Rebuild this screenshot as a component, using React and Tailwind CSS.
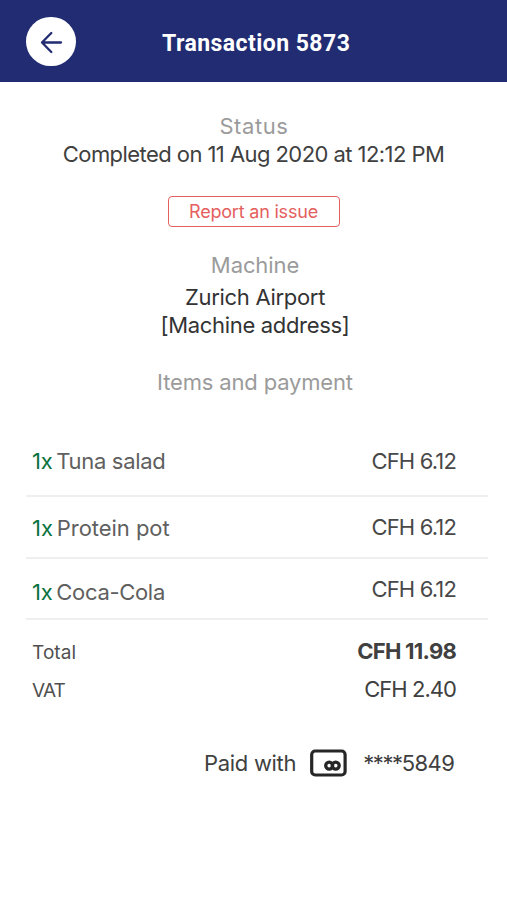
const items = [
  { name: "Tuna salad", price: "CFH 6.12", row: "h-[63px] pt-[13px]", label: "tracking-[-0.32px]" },
  { name: "Protein pot", price: "CFH 6.12", row: "h-[62px] pt-[16px]", label: "mt-px tracking-[-0.05px]" },
  { name: "Coca-Cola", price: "CFH 6.12", row: "h-[61px] pt-[16px]", label: "mt-[3px] tracking-[-0.32px]" },
];

function Header() {
  return (
    <header className="flex h-[82px] items-center bg-[#212c72] pl-[26px]">
      <button aria-label="Back" className="mt-px flex h-[49px] w-[50px] items-center justify-center rounded-full bg-white">
        <svg width="24" height="24" viewBox="0 0 24 24" fill="none" stroke="#212c72" strokeWidth="2.3" strokeLinecap="round" strokeLinejoin="round">
          <path d="M22 12.5H3M12.3 3L3 12.5L12.3 22" />
        </svg>
      </button>
      <h1 className="mt-[6px] ml-[86px] font-['Roboto',sans-serif] text-[23px] leading-7 font-bold tracking-[0.45px] whitespace-nowrap text-white">
        Transaction 5873
      </h1>
    </header>
  );
}

function CardIcon() {
  return (
    <svg className="ml-[14px] shrink-0" width="37" height="28" viewBox="0 0 37 28" fill="none" stroke="#262626">
      <rect x="1.7" y="2" width="33.4" height="24" rx="3.5" strokeWidth="3.2" />
      <circle cx="19.2" cy="16.6" r="3.5" strokeWidth="3.3" />
      <circle cx="25.7" cy="16.6" r="3.5" strokeWidth="3.3" />
    </svg>
  );
}

export default function App() {
  return (
    <div className="h-[900px] w-[507px] overflow-hidden bg-white font-['Inter',sans-serif] text-[22px] leading-7 whitespace-nowrap text-[#404040]">
      <Header />
      <main>
        <section className="flex flex-col items-center pt-[30px]">
          <h2 className="pl-px tracking-[0.6px] text-[#9b9b9b]">Status</h2>
          <p className="tracking-[-0.56px]">Completed on 11 Aug 2020 at 12:12 PM</p>
          <button className="mt-[28px] flex h-[31px] w-[172px] items-center justify-center rounded-[4px] border-[1.5px] border-[#e4605e] text-[18px] tracking-[-0.2px] text-[#e4605e]">
            Report an issue
          </button>
        </section>
        <section className="flex flex-col items-center pt-[24px] pl-[3px]">
          <h2 className="tracking-[-0.1px] text-[#9b9b9b]">Machine</h2>
          <p className="mt-[4px] tracking-[-0.3px] text-[#333]">Zurich Airport</p>
          <p className="tracking-[-0.33px] text-[#333]">[Machine address]</p>
        </section>
        <section className="pt-[29px]">
          <h2 className="pl-[3px] text-center tracking-[-0.16px] text-[#9b9b9b]">Items and payment</h2>
          <ul className="mr-[19px] ml-[26px] pt-[38px]">
            {items.map((item) => (
              <li key={item.name} className={`flex items-start justify-between border-b-2 border-[#efefef] pr-[32px] pl-[6px] ${item.row}`}>
                <span className={`flex gap-1 text-[#606060] ${item.label}`}>
                  <span className="text-[#08733f]">1x</span>
                  <span>{item.name}</span>
                </span>
                <span className="tracking-[-0.85px] text-[#484848]">{item.price}</span>
              </li>
            ))}
          </ul>
          <dl className="pt-[17px] pr-[51px] pl-[32px]">
            <div className="flex h-[38px] justify-between">
              <dt className="mt-[2px] text-[19px] leading-7 tracking-[0.1px] text-[#505050]">Total</dt>
              <dd className="font-bold tracking-[-0.75px]">CFH 11.98</dd>
            </div>
            <div className="flex h-[38px] justify-between">
              <dt className="mt-[2px] text-[19px] leading-7 tracking-[-0.9px] text-[#505050]">VAT</dt>
              <dd className="tracking-[-0.95px]">CFH 2.40</dd>
            </div>
          </dl>
          <div className="flex items-center pt-[36px] pl-[204px]">
            <span className="tracking-[-0.3px]">Paid with</span>
            <CardIcon />
            <span className="ml-[16px] tracking-[-1.4px]">****</span>
            <span className="tracking-[-0.6px]">5849</span>
          </div>
        </section>
      </main>
    </div>
  );
}
